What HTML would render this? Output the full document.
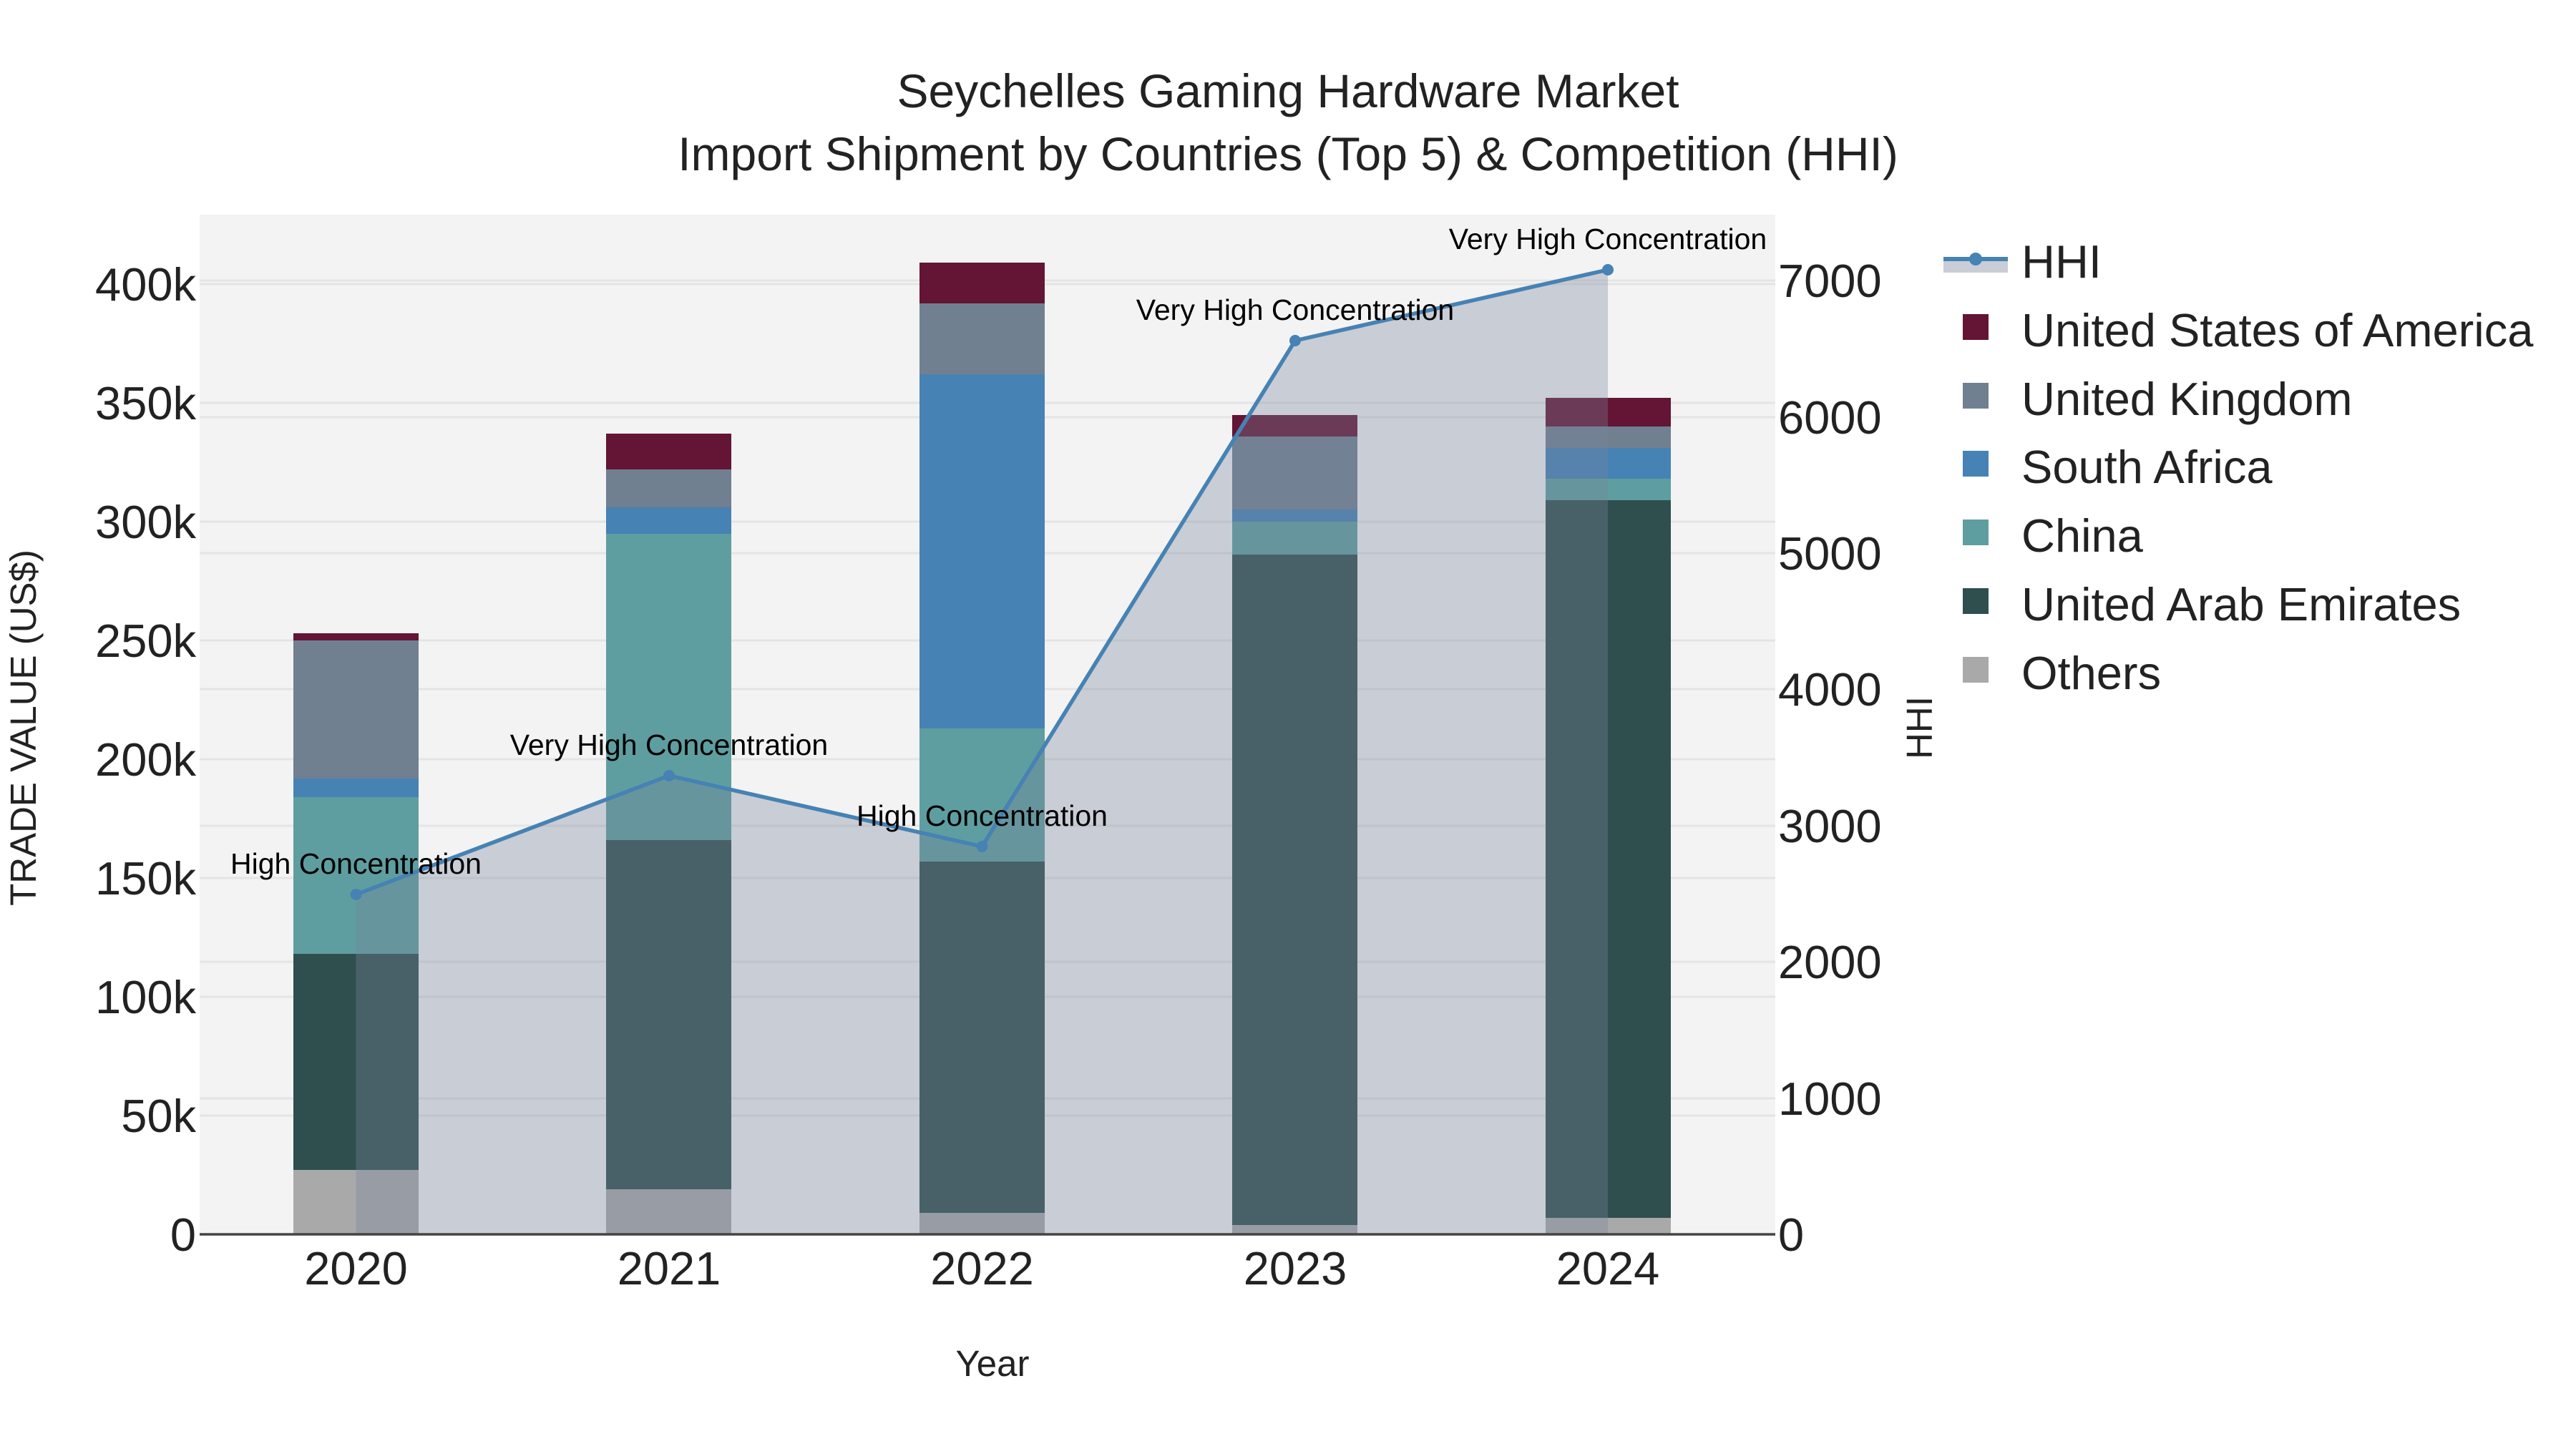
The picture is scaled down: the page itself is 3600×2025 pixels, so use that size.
<!DOCTYPE html>
<html><head><meta charset="utf-8"><style>html,body{margin:0;padding:0;background:#fff}svg{display:block}</style></head>
<body>
<svg width="3600" height="2025" viewBox="0 0 3600 2025" xmlns="http://www.w3.org/2000/svg" font-family="Liberation Sans, Arial, sans-serif">
<rect x="0" y="0" width="3600" height="2025" fill="#fff"/>
<rect x="279" y="300" width="2202" height="1425" fill="#f3f3f3"/>
<g stroke="#e4e4e4" stroke-width="3">
<line x1="279" x2="2481" y1="1559" y2="1559"/><line x1="279" x2="2481" y1="1393" y2="1393"/><line x1="279" x2="2481" y1="1227" y2="1227"/><line x1="279" x2="2481" y1="1061" y2="1061"/><line x1="279" x2="2481" y1="895" y2="895"/><line x1="279" x2="2481" y1="729" y2="729"/><line x1="279" x2="2481" y1="563" y2="563"/><line x1="279" x2="2481" y1="397" y2="397"/>
<line x1="279" x2="2481" y1="1535" y2="1535"/><line x1="279" x2="2481" y1="1344" y2="1344"/><line x1="279" x2="2481" y1="1154" y2="1154"/><line x1="279" x2="2481" y1="963" y2="963"/><line x1="279" x2="2481" y1="773" y2="773"/><line x1="279" x2="2481" y1="583" y2="583"/><line x1="279" x2="2481" y1="392" y2="392"/>
</g>
<g transform="translate(410,0)">
<rect x="0" y="1635" width="175" height="90" fill="#a9a9a9"/><rect x="0" y="1333" width="175" height="302" fill="#2f4f4f"/><rect x="0" y="1114" width="175" height="219" fill="#5f9ea0"/><rect x="0" y="1088" width="175" height="26" fill="#4682b4"/><rect x="0" y="895" width="175" height="193" fill="#708090"/><rect x="0" y="885" width="175" height="10" fill="#641434"/>
</g>
<g transform="translate(847,0)">
<rect x="0" y="1662" width="175" height="63" fill="#a9a9a9"/><rect x="0" y="1174" width="175" height="488" fill="#2f4f4f"/><rect x="0" y="746" width="175" height="428" fill="#5f9ea0"/><rect x="0" y="709" width="175" height="37" fill="#4682b4"/><rect x="0" y="656" width="175" height="53" fill="#708090"/><rect x="0" y="606" width="175" height="50" fill="#641434"/>
</g>
<g transform="translate(1285,0)">
<rect x="0" y="1695" width="175" height="30" fill="#a9a9a9"/><rect x="0" y="1204" width="175" height="491" fill="#2f4f4f"/><rect x="0" y="1018" width="175" height="186" fill="#5f9ea0"/><rect x="0" y="523" width="175" height="495" fill="#4682b4"/><rect x="0" y="424" width="175" height="99" fill="#708090"/><rect x="0" y="367" width="175" height="57" fill="#641434"/>
</g>
<g transform="translate(1722,0)">
<rect x="0" y="1712" width="175" height="13" fill="#a9a9a9"/><rect x="0" y="775" width="175" height="937" fill="#2f4f4f"/><rect x="0" y="729" width="175" height="46" fill="#5f9ea0"/><rect x="0" y="712" width="175" height="17" fill="#4682b4"/><rect x="0" y="610" width="175" height="102" fill="#708090"/><rect x="0" y="580" width="175" height="30" fill="#641434"/>
</g>
<g transform="translate(2160,0)">
<rect x="0" y="1702" width="175" height="23" fill="#a9a9a9"/><rect x="0" y="699" width="175" height="1003" fill="#2f4f4f"/><rect x="0" y="669" width="175" height="30" fill="#5f9ea0"/><rect x="0" y="626" width="175" height="43" fill="#4682b4"/><rect x="0" y="596" width="175" height="30" fill="#708090"/><rect x="0" y="556" width="175" height="40" fill="#641434"/>
</g>
<path d="M497.5,1250 L935,1084 L1372.5,1183 L1810,476 L2247,377 L2247,1725 L497.5,1725 Z" fill="rgb(119,131,155)" fill-opacity="0.34"/>
<polyline points="497.5,1250 935,1084 1372.5,1183 1810,476 2247,377" fill="none" stroke="#4682b4" stroke-width="5.5"/>
<g fill="#4682b4"><circle cx="497.5" cy="1250" r="8"/><circle cx="935" cy="1084" r="8"/><circle cx="1372.5" cy="1183" r="8"/><circle cx="1810" cy="476" r="8"/><circle cx="2247" cy="377" r="8"/></g>
<line x1="279" x2="2481" y1="1725" y2="1725" stroke="#444" stroke-width="3.5"/>
<g font-size="41" fill="#000" text-anchor="middle">
<text x="497.5" y="1221">High Concentration</text><text x="935" y="1055">Very High Concentration</text><text x="1372.5" y="1154">High Concentration</text><text x="1810" y="447">Very High Concentration</text><text x="2247" y="348">Very High Concentration</text>
</g>
<g font-size="66" fill="#222" text-anchor="middle">
<text x="1800" y="150">Seychelles Gaming Hardware Market</text>
<text x="1800" y="238">Import Shipment by Countries (Top 5) &amp; Competition (HHI)</text>
</g>
<g font-size="65" fill="#222" text-anchor="end">
<text x="274" y="1748">0</text><text x="274" y="1582">50k</text><text x="274" y="1416">100k</text><text x="274" y="1250">150k</text><text x="274" y="1084">200k</text><text x="274" y="918">250k</text><text x="274" y="752">300k</text><text x="274" y="586">350k</text><text x="274" y="420">400k</text>
</g>
<g font-size="65" fill="#222">
<text x="2485" y="1748">0</text><text x="2485" y="1558">1000</text><text x="2485" y="1367">2000</text><text x="2485" y="1177">3000</text><text x="2485" y="986">4000</text><text x="2485" y="796">5000</text><text x="2485" y="606">6000</text><text x="2485" y="415">7000</text>
</g>
<g font-size="65" fill="#222" text-anchor="middle">
<text x="497.5" y="1795">2020</text><text x="935" y="1795">2021</text><text x="1372.5" y="1795">2022</text><text x="1810" y="1795">2023</text><text x="2247" y="1795">2024</text>
</g>
<text x="1387" y="1923" font-size="51" fill="#222" text-anchor="middle">Year</text>
<text transform="translate(50,1017) rotate(-90)" font-size="51" fill="#222" text-anchor="middle">TRADE VALUE (US$)</text>
<text transform="translate(2700,1017) rotate(-90)" font-size="51" fill="#222" text-anchor="middle">HHI</text>
<rect x="2716" y="362" width="90" height="19" fill="#c9cdd5"/>
<line x1="2716" x2="2806" y1="362" y2="362" stroke="#4682b4" stroke-width="6"/><circle cx="2761" cy="362" r="9" fill="#4682b4"/>
<rect x="2743" y="439" width="36" height="36" fill="#641434"/>
<rect x="2743" y="535" width="36" height="36" fill="#708090"/>
<rect x="2743" y="630" width="36" height="36" fill="#4682b4"/>
<rect x="2743" y="726" width="36" height="36" fill="#5f9ea0"/>
<rect x="2743" y="822" width="36" height="36" fill="#2f4f4f"/>
<rect x="2743" y="918" width="36" height="36" fill="#a9a9a9"/>
<g font-size="65" fill="#222">
<text x="2825" y="388">HHI</text><text x="2825" y="484">United States of America</text><text x="2825" y="580">United Kingdom</text><text x="2825" y="675">South Africa</text><text x="2825" y="771">China</text><text x="2825" y="867">United Arab Emirates</text><text x="2825" y="963">Others</text>
</g>
</svg>
</body></html>
